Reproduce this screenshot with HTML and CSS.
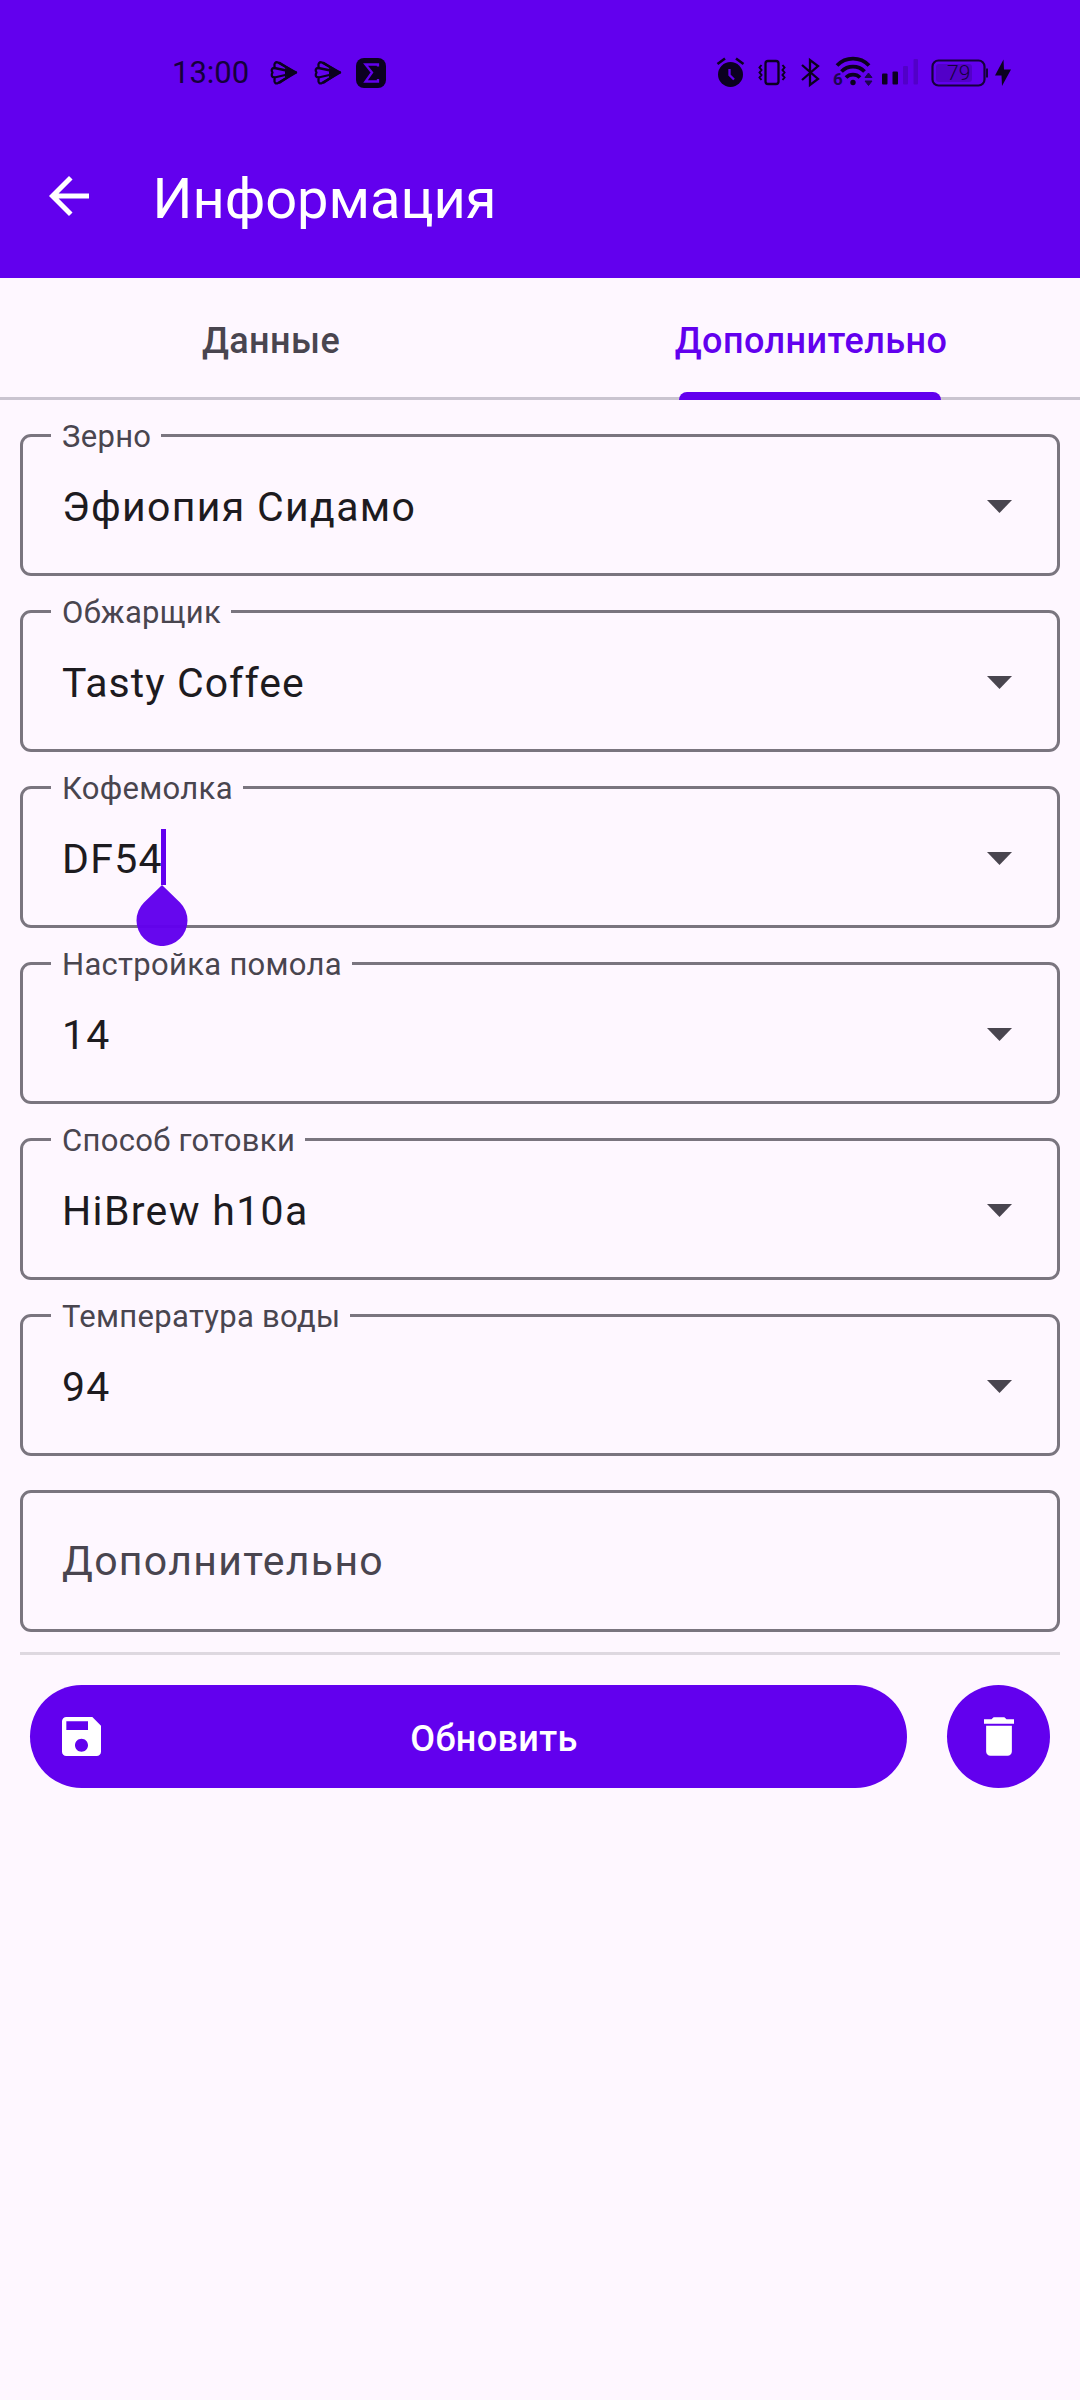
FILE: index.html
```html
<!DOCTYPE html>
<html lang="ru">
<head>
<meta charset="utf-8">
<title>Информация</title>
<link rel="stylesheet" href="styles.css">
</head>
<body>
<header class="header">
  <div class="status">
    <div class="status-left">
      <span class="clock">13:00</span>
      <svg class="notices" width="120" height="40" viewBox="0 0 120 40">
        <defs>
          <g id="shell" fill="none" stroke="#0b0020" stroke-width="2.300" stroke-linejoin="round">
            <path d="M26 17.500 8 7.500 C5.500 6.500 4 8.500 4.500 11 L4.500 13 C1.500 13 1 15 2.500 17.500 C1 20 1.500 22.500 4.500 22.500 L4.500 25 C4 28 6 29 8 28Z"/>
            <path d="M4.500 13 26 17.500 4.500 22.500M9 7.500 24 17M9 28 24 18"/>
            <path d="M15 13 26.500 17.500 15 22.500Z" fill="#0b0020" stroke="none"/>
          </g>
        </defs>
        <use href="#shell"/>
        <use href="#shell" x="44"/>
        <rect x="86" y="3" width="30" height="30" rx="8" fill="#0b0020"/>
        <path d="M108 11.500V9.500H95.500L102 17.500 95.500 26.500H108V24" fill="none" stroke="#6200ee" stroke-width="2.300"/>
      </svg>
    </div>
    <svg class="system" width="330" height="70" viewBox="0 0 330 70">
      <g fill="#0b0020">
        <circle cx="30.500" cy="34.500" r="12.500"/>
        <path d="M17.500 24 25 18.500M36 18.500 43.500 24" stroke="#0b0020" stroke-width="2.600"/>
        <path d="M29.500 29V35L34 39.500" fill="none" stroke="#6200ee" stroke-width="2.300"/>
      </g>
      <g fill="none" stroke="#0b0020" stroke-width="2.300">
        <rect x="65.500" y="21" width="13" height="23" rx="2.500"/>
        <path d="M61.500 25 59.500 27.500 61.500 30 59.500 32.500 61.500 35 59.500 37.500 61.500 40M82.500 25 84.500 27.500 82.500 30 84.500 32.500 82.500 35 84.500 37.500 82.500 40" stroke-width="2"/>
        <path d="M102 25 118 39 110 45V20L118 26 102 40"/>
      </g>
      <g fill="none" stroke="#0b0020" stroke-width="3.800">
        <path d="M137 25.500A22 22 0 0 1 169 25.500"/>
        <path d="M141.500 31.500A16 16 0 0 1 164.500 31.500"/>
        <path d="M146 37.500A10 10 0 0 1 160 37.500"/>
      </g>
      <circle cx="153" cy="42.500" r="2.700" fill="#0b0020"/>
      <text x="133" y="44.500" class="wifi-gen">6</text>
      <path d="M165 37.500 168.500 33 172 37.500ZM165 41 168.500 45.500 172 41Z" fill="#1c0550" stroke="#1c0550"/>
      <rect x="182" y="33.500" width="5.500" height="11" rx="1" fill="#0b0020"/>
      <rect x="192.500" y="31.500" width="5.500" height="13" rx="1" fill="#0b0020"/>
      <rect x="203" y="26" width="5" height="18.500" rx="1" fill="#5200c8"/>
      <rect x="213.500" y="19" width="4.500" height="25.500" rx="1" fill="#5200c8"/>
      <rect x="236" y="24" width="36" height="18" rx="3" fill="#5200c8"/>
      <rect x="232.500" y="20.500" width="52" height="25" rx="6" fill="none" stroke="#15003c" stroke-width="2.200"/>
      <rect x="286" y="28.500" width="2" height="9" fill="#15003c"/>
      <text x="247" y="39.500" class="charge">79</text>
      <path d="M303.500 19.500 295 35.500H301.500L302 46 311 29.500H304Z" fill="#0b0020"/>
    </svg>
  </div>
  <div class="appbar">
    <svg class="back" width="40" height="40" viewBox="4 4 16 16"><path fill="#fff" d="M20 11H7.830l5.590-5.590L12 4l-8 8 8 8 1.410-1.410L7.830 13H20v-2z"/></svg>
    <h1 class="title">Информация</h1>
  </div>
</header>
<nav class="tabs">
  <div class="tab">Данные</div>
  <div class="tab active"><span class="tab-text">Дополнительно</span><i class="indicator"></i></div>
</nav>
<main class="form">
  <div class="field"><span class="label">Зерно</span><span class="value">Эфиопия Сидамо</span><i class="arrow"></i></div>
  <div class="field"><span class="label">Обжарщик</span><span class="value latin">Tasty Coffee</span><i class="arrow"></i></div>
  <div class="field"><span class="label">Кофемолка</span><span class="value">DF54</span><i class="caret"></i>
    <svg class="handle" width="52" height="61" viewBox="0 0 52 61"><path d="M26 0 44 17.500A25.500 25.500 0 1 1 8 17.500Z"/></svg>
    <i class="arrow"></i></div>
  <div class="field"><span class="label">Настройка помола</span><span class="value">14</span><i class="arrow"></i></div>
  <div class="field"><span class="label">Способ готовки</span><span class="value">HiBrew h10a</span><i class="arrow"></i></div>
  <div class="field"><span class="label">Температура воды</span><span class="value">94</span><i class="arrow"></i></div>
  <div class="field"><span class="value hint">Дополнительно</span></div>
  <hr class="divider">
  <div class="actions">
    <div class="update">
      <svg class="save" width="39" height="39" viewBox="3 3 18 18"><path fill="#fff" d="M17 3H5c-1.110 0-2 .9-2 2v14c0 1.100.89 2 2 2h14c1.100 0 2-.9 2-2V7l-4-4zm-5 16c-1.660 0-3-1.340-3-3s1.340-3 3-3 3 1.340 3 3-1.340 3-3 3zm3-10H5V5h10v4z"/></svg>
      <span class="update-text">Обновить</span>
    </div>
    <div class="delete">
      <svg width="30" height="39" viewBox="5 3 14 18"><path fill="#fff" d="M6 19c0 1.100.9 2 2 2h8c1.100 0 2-.9 2-2V7H6v12zM19 4h-3.500l-1-1h-5l-1 1H5v2h14V4z"/></svg>
    </div>
  </div>
</main>
</body>
</html>
```
FILE: styles.css
```css
* { box-sizing: border-box; }
body { margin: 0; height: 2400px; background: #fef7ff; font-family: Roboto, sans-serif; color: #1d1b20; }
svg { display: block; flex: none; }
.header { height: 278px; background: #6200ee; }
.status { height: 118px; padding-top: 40px; display: flex; justify-content: space-between; }
.status-left { display: flex; padding-left: 172px; }
.clock { width: 94px; padding-top: 14px; font-size: 31px; line-height: 38px; color: #15003c; }
.notices { margin: 15px 0 0 4px; }
.system { margin-right: 50px; }
.wifi-gen { font: 700 17px Roboto, sans-serif; fill: #1c0550; }
.charge { font: 300 21px Roboto, sans-serif; fill: #15003c; }
.appbar { height: 160px; display: flex; padding: 58px 0 0 49px; }
.title { margin: -10px 0 0 63.500px; font-size: 56px; line-height: 66px; font-weight: 400; letter-spacing: -.05px; color: #fff; }
.tabs { height: 122px; display: flex; border-bottom: 3px solid #cac4d0; }
.tab { flex: 1; display: flex; justify-content: center; padding: 42px 0 0 2px; font-size: 36px; line-height: 42px; font-weight: 500; letter-spacing: .42px; color: #49454f; position: relative; }
.active { color: #6200ee; }
.indicator { position: absolute; left: 139px; bottom: -3px; width: 262px; height: 8px; border-radius: 8px 8px 0 0; background: #6200ee; }
.form { padding: 34px 20px 0; display: flex; flex-direction: column; gap: 34px; }
.field { position: relative; height: 142px; border: 3px solid #7a757f; border-radius: 11px; display: flex; align-items: center; padding: 0 45px 0 39px; }
.label { position: absolute; left: 28px; top: -18px; padding: 0 10px 0 11px; background: #fef7ff; font-size: 31px; line-height: 36px; letter-spacing: .3px; color: #49454f; white-space: nowrap; }
.value { font-size: 41px; line-height: 48px; letter-spacing: 1.330px; margin-top: 4px; white-space: nowrap; }
.latin { letter-spacing: 1.050px; }
.hint { color: #49454f; margin-top: 0; }
.arrow { margin: 3px 0 0 auto; width: 25px; height: 13px; background: #49454f; clip-path: polygon(0 0, 100% 0, 50% 100%); }
.caret { position: absolute; left: 138px; top: 40px; width: 5px; height: 56px; background: #6200ee; }
.handle { position: absolute; left: 112.500px; top: 96px; z-index: 2; fill: #6200ee; opacity: .97; }
.divider { width: 100%; height: 3px; margin: -14px 0 -4px; border: 0; background: #ded8e0; }
.actions { display: flex; gap: 40px; padding: 0 10px; }
.update { flex: 1; height: 103px; border-radius: 52px; background: #6200ee; display: flex; align-items: center; padding-left: 32px; padding-right: 32px; }
.update-text { flex: 1; padding-left: 12px; margin-top: 4px; text-align: center; font-size: 36px; line-height: 42px; font-weight: 500; letter-spacing: .35px; color: #fff; }
.delete { width: 103px; height: 103px; border-radius: 50%; background: #6200ee; display: flex; align-items: center; justify-content: center; }
```
